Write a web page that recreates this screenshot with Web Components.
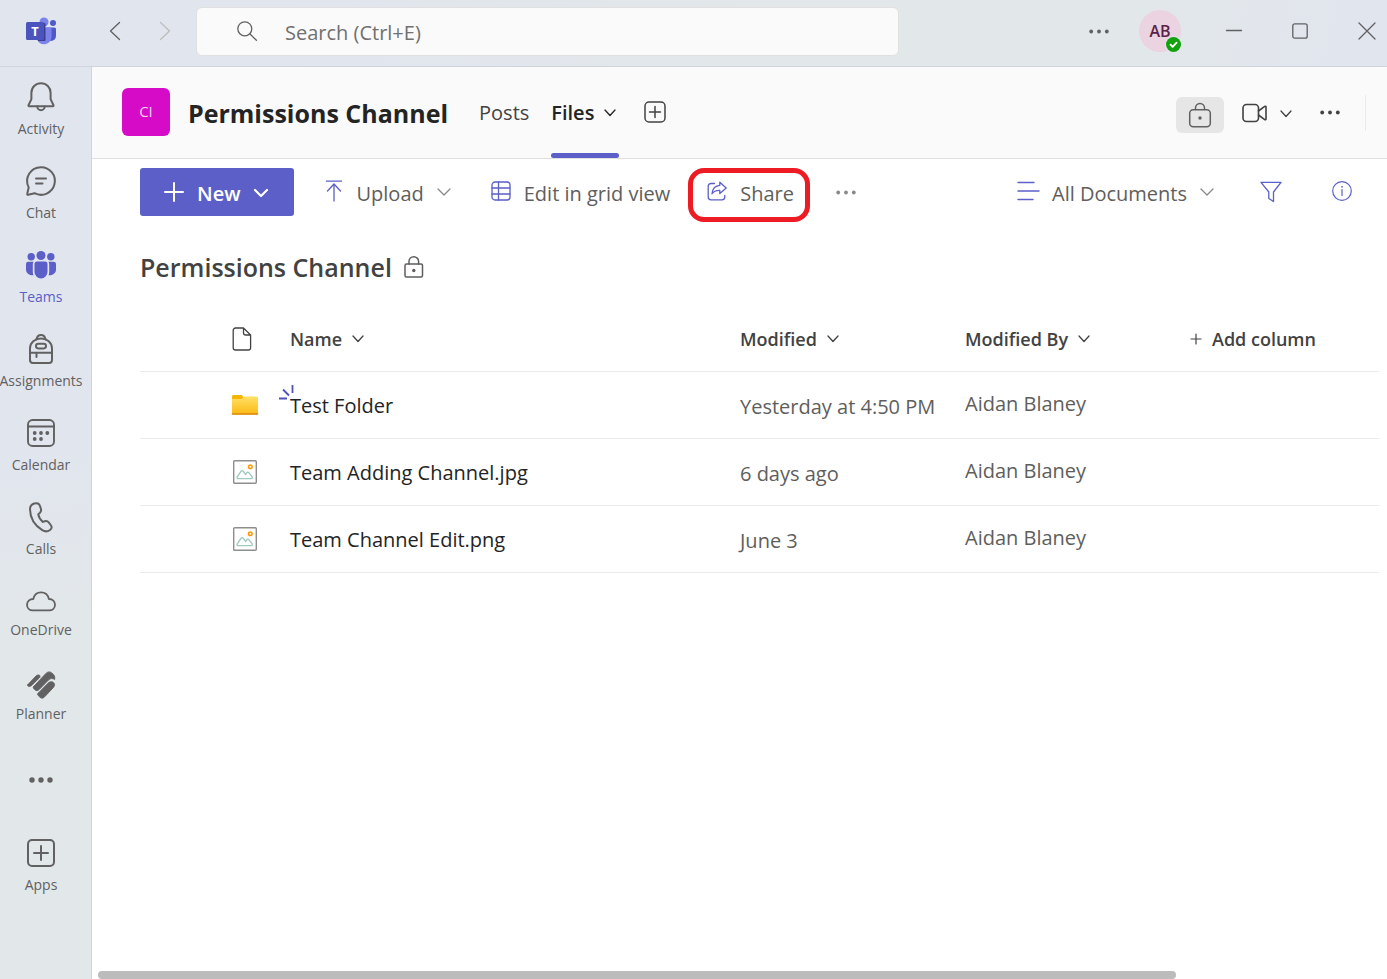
<!DOCTYPE html>
<html lang="en">
<head>
<meta charset="utf-8">
<meta name="viewport" content="width=device-width, initial-scale=1">
<title>Permissions Channel - Files</title>
<style>
  body { margin: 0; font-family: "Open Sans", "Noto Sans", sans-serif; color: #424242; }
</style>
</head>
<body>
<teams-app></teams-app>

<script>
const ICONS = {
  logo: [30, 28, `<g stroke="none"><circle cx="18" cy="5" r="4.500" fill="#7b83eb"/><circle cx="27" cy="6" r="3" fill="#5059c9"/>
    <path d="M20 10.500h8.500a1.500 1.500 0 0 1 1.500 1.500V19a5 5 0 0 1-10 0z" fill="#5059c9"/>
    <path d="M10 10.500h14a1.500 1.500 0 0 1 1.500 1.500V20a7.500 7.500 0 0 1-14.800 1.500z" fill="#7b83eb"/>
    <path d="M11 6h7.500a1 1 0 0 1 1 1v16a1 1 0 0 1-1 1H12z" fill="#3c3f91"/>
    <rect x="0" y="5" width="18" height="18" rx="1.600" fill="#4b53bc"/>
    <text x="9" y="18.500" text-anchor="middle" font-family="Open Sans, sans-serif" font-weight="700" font-size="13" fill="#fff">T</text></g>`],
  back: [12, 20, `<path d="M10.500 1.500 1.500 10l9 8.500"/>`],
  forward: [12, 20, `<path d="M1.500 1.500 10.500 10l-9 8.500"/>`],
  search: [20, 20, `<circle cx="7.800" cy="7.800" r="7"/><path d="m13 13 6.400 6.300"/>`],
  dots: [20, 5, `<g fill="currentColor" stroke="none"><circle cx="2.200" cy="2.500" r="1.900"/><circle cx="10" cy="2.500" r="1.900"/><circle cx="17.800" cy="2.500" r="1.900"/></g>`],
  railDots: [24, 6, `<g fill="currentColor" stroke="none"><circle cx="3" cy="3" r="2.700"/><circle cx="12" cy="3" r="2.700"/><circle cx="21" cy="3" r="2.700"/></g>`],
  minimize: [16, 16, `<path d="M.5 7.500h15"/>`],
  maximize: [16, 16, `<rect x=".8" y=".8" width="14.400" height="14.400" rx="2"/>`],
  close: [18, 18, `<path d="m1 1 16 16M17 1 1 17"/>`],
  check: [15, 15, `<circle cx="7.500" cy="7.500" r="7.500" fill="#13a10e" stroke="none"/><path d="m4.500 7.700 2.100 2.100L10.600 5.700" stroke="#fff" stroke-width="1.800"/>`],
  bell: [30, 30, `<path d="M15 1.200c-5.400 0-9.600 4.200-9.600 9.500v6.400l-2.900 6.100c-.2.500.1 1 .6 1h23.800c.5 0 .8-.5.6-1l-2.900-6.100v-6.400c0-5.300-4.200-9.500-9.600-9.500z"/><path d="M11.300 24.500a3.700 3.700 0 0 0 7.400 0"/>`, 2],
  chat: [30, 30, `<path d="M15 1.200A13.800 13.800 0 1 1 8.600 27.200L2.200 28.800c-.7.200-1.200-.4-1-1L2.700 21.400A13.800 13.800 0 0 1 15 1.200z"/><path d="M10 12.500h10M10 17.500h6.500"/>`, 2],
  teams: [30, 30, `<g fill="currentColor" stroke="none"><circle cx="15" cy="5.500" r="4.500"/><circle cx="5.200" cy="6.700" r="3.700"/><circle cx="24.800" cy="6.700" r="3.700"/>
    <path d="M11 11.500h8a2.500 2.500 0 0 1 2.500 2.500v8a6.500 6.500 0 0 1-13 0v-8a2.500 2.500 0 0 1 2.500-2.500z"/>
    <path d="M2.300 11.800h5.300c-.6.900-.8 1.700-.8 2.700v7.500c0 1.200.2 2.200.7 3.200C3.300 25.800 0 23 0 19.500v-5.400a2.300 2.300 0 0 1 2.300-2.300zM27.700 11.800h-5.300c.6.900.8 1.700.8 2.700v7.500c0 1.200-.2 2.200-.7 3.200 4.200.6 7.500-2.200 7.500-5.700v-5.400a2.300 2.300 0 0 0-2.300-2.300z"/></g>`],
  backpack: [30, 30, `<path d="M4 26V14.500C4 8.500 9 4.600 15 4.600s11 3.900 11 9.900V26a3 3 0 0 1-3 3H7a3 3 0 0 1-3-3z"/><path d="M10.500 5.500C11 2.500 12.700 1 15 1s4 1.500 4.500 4.500M4 18.700h22M10.500 19v4"/><rect x="10" y="9.800" width="10" height="4.600" rx="2.300"/>`, 2],
  calendar: [30, 30, `<rect x="2" y="2" width="26" height="26" rx="4.500"/><path d="M2 8.500h26"/><g fill="currentColor" stroke="none"><circle cx="8.700" cy="15" r="1.900"/><circle cx="15" cy="15" r="1.900"/><circle cx="21.300" cy="15" r="1.900"/><circle cx="8.700" cy="21" r="1.900"/><circle cx="15" cy="21" r="1.900"/></g>`, 1.900],
  phone: [30, 30, `<path d="M8.200 1.500c2.900-1 5 .1 5.900 2.800l.8 2.500c.5 1.800.1 3.200-1.300 4.400l-1.300 1.100c.4 2.600 2 5.200 4.600 7.600l1.900-.6c1.600-.5 3 0 4.100 1.400l1.800 2.300c1.500 2 1.200 3.600-.7 5-2.400 1.700-5 1.900-7.700.2C8.800 23.400 4.100 15.500 4 7.200 4 4.200 5.500 2.400 8.200 1.500z"/>`, 2],
  cloud: [30, 30, `<path d="M6.800 24.400C3.500 24.400 1 22 1 18.800s2.600-5.800 6.300-5.800c.9-4.100 3.900-6.700 7.700-6.700 3.900 0 7 2.500 7.900 6.700 3.600-.1 6.100 2.400 6.100 5.700 0 3.300-2.500 5.700-5.800 5.700z"/>`, 1.800],
  planner: [30, 30, `<g fill="currentColor" stroke-width=".9"><path d="M1.900 14.600 10 6c1.300-1.300 3.300-1.300 3.900-.3.400.7.100 1.500-.7 2.300l-7.300 7.200c-1.700 1.600-3.500 1.500-4.200.6-.3-.3-.2-.8.200-1.200z"/>
    <path d="M7.500 16.700 19.400 4c2-2.200 4-2.800 6.300-1.100 2.300 1.600 3.600 3.700 2.900 6.600-1.600-1.300-4.300-1.400-6.100.5l-9.400 9.600c-1.300 1.300-3 1.300-4 .3l-1.500-1.500c-.5-.5-.5-1.200-.1-1.700z"/>
    <path d="m12.200 23.200 9.800-10c2-1.900 4.700-1.800 5.900-.2 1.100 1.400.7 3.200-.7 4.700l-8.700 9.200c-1.600 1.600-3.200 1.600-4.700.2l-1.600-1.600c-.8-.8-.8-1.600 0-2.300z"/></g>`],
  apps: [30, 30, `<rect x="2" y="2" width="26" height="26" rx="4"/><path d="M15 8v14M8 15h14"/>`, 2],
  addTab: [22, 22, `<rect x="1" y="1" width="20" height="20" rx="4"/><path d="M11 5.500v11M5.500 11h11"/>`, 1.500],
  chevron: [14, 8, `<path d="m1 1 6 6 6-6"/>`],
  chevronBold: [14, 8, `<path d="m1 1 6 6 6-6"/>`, 2.200],
  chevronSmall: [12, 8, `<path d="m1 1 5 5.500L11 1"/>`],
  plusSmall: [12, 12, `<path d="M6 1v10M1 6h10"/>`, 1.200],
  lock: [24, 26, `<rect x="1.700" y="7.700" width="20.600" height="17" rx="3.500"/><path d="M7.500 7.500V6a4.500 4.500 0 0 1 9 0v1.500"/><circle cx="12" cy="16" r="1.700" fill="currentColor" stroke="none"/>`, 1.500],
  siteLock: [20, 22, `<rect x="1" y="8" width="17.500" height="13" rx="1.500"/><path d="M5 8V5.500a4.800 4.800 0 0 1 9.600 0V8"/><circle cx="9.800" cy="14.500" r="1.700" fill="currentColor" stroke="none"/>`, 1.500],
  camera: [26, 20, `<rect x="1" y="1.500" width="15.500" height="17" rx="3.500"/><path d="m16.500 8 6.200-4.600c.6-.4 1.300 0 1.300.6v12c0 .7-.8 1-1.300.6L16.500 12"/>`, 1.600],
  plus: [20, 20, `<path d="M10 1v18M1 10h18"/>`, 2],
  upload: [20, 22, `<path d="M2.500 1.200h15M10 21V4M3.500 11 10 4l6.500 7"/>`],
  grid: [20, 20, `<rect x="1" y="1" width="18" height="18" rx="3"/><path d="M1 7h18M1 13h18M7.500 1v18"/>`, 1.300],
  share: [20, 20, `<path d="M7.500 2.500H4A2.800 2.800 0 0 0 1.200 5.300V16A2.800 2.800 0 0 0 4 18.800h11a2.800 2.800 0 0 0 2.800-2.800v-1.500"/><path d="M12.800 1.200 19.200 7l-6.400 5.600V9.400C9 9.200 6.800 10.300 5 12.700c.4-4.500 3-8 7.800-8.400z"/>`, 1.300],
  view: [22, 20, `<path d="M1 1.500h16M1 10h21M1 18.500h15"/>`, 1.400],
  filter: [22, 22, `<path d="M1 1.300h20L13.500 11v9.500l-4.700-3V11z"/>`],
  info: [20, 20, `<circle cx="10" cy="10" r="9.300"/><path d="M10 8.500v6"/><circle cx="10" cy="5.800" r=".9" fill="currentColor" stroke="none"/>`, 1.200],
  file: [22, 24, `<path d="M12.500 1H4.500A2.300 2.300 0 0 0 2.200 3.300v17.400A2.300 2.300 0 0 0 4.500 23h12.800a2.300 2.300 0 0 0 2.300-2.300V8zM12.500 1v4.700A2.300 2.300 0 0 0 14.800 8h4.800"/>`, 1.300],
  folder: [28, 22, `<defs><linearGradient id="f" x2="0" y2="1"><stop stop-color="#ffe066"/><stop offset="1" stop-color="#fdb913"/></linearGradient></defs>
    <path d="M1 5V2.500C1 1.700 1.700 1 2.500 1h8.300l2 2.500L10 6z" fill="#f5b400" stroke="none"/><path d="M1 5h9.500L13 2.500h12.500a1.500 1.500 0 0 1 1.500 1.500v15a1.500 1.500 0 0 1-1.500 1.500h-23A1.500 1.500 0 0 1 1 19z" fill="url(#f)" stroke="none"/><path d="M1.300 20h25.400" stroke="#d78a10"/>`],
  image: [28, 24, `<rect x="2.700" y=".7" width="22.600" height="22.600" rx="1" fill="#fff" stroke="#8e8e8e" stroke-width="1.400"/><circle cx="19.300" cy="6.800" r="1.800" stroke="#ff9800" stroke-width="1.500"/>
    <path d="M6.500 18.600c-.7-.3-.6-1.200-.2-1.800l3.600-5.400c.7-1 1.700-1 2.400 0l2.200 3 1.200-1.500c.7-.8 1.600-.8 2.300 0l3 3.700c.6.800.3 2-.8 2z" stroke="#9fcabf" stroke-width="1.400"/>`],
  glint: [16, 16, `<path d="M1 14.500h8M5 5.500l6 6M14.500 1v8" stroke="#4f52b8" stroke-width="1.800" stroke-linecap="butt"/>`]
};

function define(name, html) {
  const template = document.createElement("template");
  template.innerHTML = html;
  customElements.define(name, class extends HTMLElement {
    constructor() {
      super();
      this.attachShadow({ mode: "open" }).append(template.content.cloneNode(true));
    }
  });
}

/* <ui-icon name="…"> draws one glyph from the icon set at its natural size. */
customElements.define("ui-icon", class extends HTMLElement {
  connectedCallback() {
    if (this.shadowRoot) return;
    const [w, h, art, stroke = 1.3] = ICONS[this.getAttribute("name")];
    this.attachShadow({ mode: "open" }).innerHTML = `
      <style>:host { display: inline-flex; flex: none; } svg { display: block; overflow: visible; }</style>
      <svg width="${w}" height="${h}" viewBox="0 0 ${w} ${h}" fill="none" stroke="currentColor"
        stroke-width="${stroke}" stroke-linecap="round" stroke-linejoin="round" aria-hidden="true">${art}</svg>`;
  }
});

/* Icon-only button. */
customElements.define("icon-button", class extends HTMLElement {
  connectedCallback() {
    if (this.shadowRoot) return;
    this.attachShadow({ mode: "open" }).innerHTML = `
      <style>
        :host { display: inline-flex; flex: none; }
        button { display: flex; align-items: center; justify-content: center; border: 0; padding: 0; background: none; color: inherit; font: inherit; }
      </style>
      <button type="button" aria-label="${this.getAttribute("label")}"><ui-icon name="${this.getAttribute("icon")}"></ui-icon></button>`;
  }
});

/* Labelled toolbar button, with an optional drop-down chevron. */
customElements.define("command-button", class extends HTMLElement {
  connectedCallback() {
    if (this.shadowRoot) return;
    const chevron = this.hasAttribute("primary") ? "chevronBold" : "chevron";
    this.attachShadow({ mode: "open" }).innerHTML = `
      <style>
        :host { display: inline-flex; flex: none; position: relative; color: #605e5c; --icon: #5b5fc7; --chevron: #8a8886; }
        button { display: flex; align-items: center; gap: 13px; height: 48px; border: 0; padding: 0; background: none;
          color: inherit; font: inherit; font-size: 20px; line-height: 28px; white-space: nowrap; }
        span { padding-top: 4px; }
        .icon { color: var(--icon); margin-bottom: 2px; }
        .chevron { color: var(--chevron); }
        :host([primary]) { color: #fff; --icon: #fff; --chevron: #fff; }
        :host([primary]) button { background: #5b5fc7; border-radius: 3px; padding: 0 26px 0 24px; font-weight: 600; }
        :host([primary]) .icon { margin-bottom: 0; }
        :host([primary]) .chevron { margin-top: 2px; }
        :host([marked])::after { content: ""; position: absolute; inset: 0 -16px -6px -19px; border: 5px solid #ed1c24; border-radius: 16px; pointer-events: none; }
      </style>
      <button type="button"><ui-icon class="icon" name="${this.getAttribute("icon")}"></ui-icon><span><slot></slot></span>
      ${this.hasAttribute("menu") ? `<ui-icon class="chevron" name="${chevron}"></ui-icon>` : ""}</button>`;
  }
});

/* Entry of the left app rail. */
customElements.define("rail-item", class extends HTMLElement {
  connectedCallback() {
    if (this.shadowRoot) return;
    this.attachShadow({ mode: "open" }).innerHTML = `
      <style>
        :host { display: block; color: #616161; }
        :host([selected]) { color: #5b5fc7; }
        button { display: flex; flex-direction: column; align-items: center; gap: 7px; width: 100%; height: 84px;
          border: 0; padding: 11px 0 0; background: none; color: inherit; font: inherit; font-size: 14px; line-height: 20px; }
        :host([compact]) button { gap: 4px; }
        :host([more]) button { padding-top: 34px; }
      </style>
      <button type="button" ${this.hasAttribute("more") ? 'aria-label="More apps"' : ""}><ui-icon name="${this.getAttribute("icon")}"></ui-icon><span><slot></slot></span></button>`;
  }
});

define("title-bar", `
  <style>
    :host { display: flex; align-items: center; height: 62px; padding: 0 11px 4px 26px; border-bottom: 1px solid #d1d5db; color: #616161; }
    .back { margin-left: 53px; }
    .forward { margin-left: 38px; color: #bdbdbd; }
    .search { box-sizing: border-box; display: flex; align-items: center; gap: 28px; flex: 1; max-width: 703px; height: 49px; margin-left: 25px; padding: 0 40px;
      border: 1px solid #e0e0e0; border-radius: 6px; background: #fafafa; }
    .search ui-icon { margin-bottom: 1px; }
    input { flex: 1; min-width: 0; border: 0; padding: 3px 0 0; outline: 0; background: none; font: inherit; font-size: 20px; line-height: 28px; color: #424242; }
    input::placeholder { color: #707070; opacity: 1; }
    .right { display: flex; align-items: center; margin-left: auto; gap: 50px; }
    .me { display: flex; align-items: center; gap: 30px; margin-right: -5px; }
    .avatar { position: relative; display: grid; place-items: center; width: 42px; height: 42px; border: 0; padding: 0; border-radius: 50%;
      background: #ebd3e1; color: #5c2247; font: inherit; font-weight: 600; font-size: 16px; line-height: 20px; }
    .avatar ui-icon { position: absolute; right: 0; bottom: 0; border-radius: 50%; box-shadow: 0 0 0 1px #e2e7ea; }
  </style>
  <ui-icon name="logo"></ui-icon>
  <icon-button class="back" icon="back" label="Back"></icon-button>
  <icon-button class="forward" icon="forward" label="Forward"></icon-button>
  <label class="search"><ui-icon name="search"></ui-icon><input type="text" placeholder="Search (Ctrl+E)" aria-label="Search"></label>
  <div class="right">
    <div class="me">
      <icon-button icon="dots" label="Settings and more"></icon-button>
      <button type="button" class="avatar">AB<ui-icon name="check"></ui-icon></button>
    </div>
    <icon-button icon="minimize" label="Minimize"></icon-button>
    <icon-button icon="maximize" label="Maximize"></icon-button>
    <icon-button icon="close" label="Close"></icon-button>
  </div>`);

define("app-rail", `
  <style>:host { display: block; padding: 4px 9px 0 0; border-right: 1px solid #d1d5db; } nav { display: block; }</style>
  <nav aria-label="Apps">
    <rail-item icon="bell">Activity</rail-item>
    <rail-item icon="chat">Chat</rail-item>
    <rail-item icon="teams" selected>Teams</rail-item>
    <rail-item icon="backpack">Assignments</rail-item>
    <rail-item icon="calendar">Calendar</rail-item>
    <rail-item icon="phone">Calls</rail-item>
    <rail-item icon="cloud" compact>OneDrive</rail-item>
    <rail-item icon="planner" compact>Planner</rail-item>
    <rail-item icon="railDots" more></rail-item>
    <rail-item icon="apps">Apps</rail-item>
  </nav>`);

define("channel-header", `
  <style>
    :host { display: flex; align-items: center; height: 91px; padding: 0 21px 0 30px; background: #fafafa; border-bottom: 1px solid #e0e0e0; color: #424242; }
    .badge { display: grid; place-items: center; flex: none; box-sizing: border-box; width: 48px; height: 48px; margin-bottom: 2px; padding-bottom: 2px; border-radius: 6px; background: #d60bc8; color: #fbd0f6; font-size: 15px; line-height: 20px; }
    h1 { margin: 0 0 0 18px; font-size: 25px; line-height: 32px; font-weight: 700; color: #242424; white-space: nowrap; }
    nav { display: flex; align-self: stretch; gap: 22px; margin: 0 28px 0 31px; font-size: 20px; line-height: 28px; }
    a { display: flex; align-items: center; gap: 10px; color: inherit; text-decoration: none; border: solid transparent; border-width: 6px 0 5px; position: relative; }
    a[aria-current] { font-weight: 600; color: #242424; }
    a[aria-current]::after { content: ""; position: absolute; left: 0; right: -3px; bottom: -5px; height: 5px; border-radius: 3px; background: #5b5fc7; }
    .add { margin-bottom: 2px; }
    .tools { display: flex; align-items: center; margin-left: auto; }
    .lock { display: grid; place-items: center; width: 48px; height: 36px; border: 0; padding: 0; margin: 4px 18px 0 0; border-radius: 6px; background: #e6e6e6; color: #616161; }
    .menu { margin: 2px 28px 0 12px; }
    .rule { width: 1px; height: 36px; margin-left: 25px; background: #ebebeb; }
  </style>
  <span class="badge">CI</span>
  <h1>Permissions Channel</h1>
  <nav aria-label="Channel tabs">
    <a href="#posts">Posts</a>
    <a href="#files" aria-current="page">Files <ui-icon name="chevronSmall"></ui-icon></a>
  </nav>
  <icon-button class="add" icon="addTab" label="Add a tab"></icon-button>
  <div class="tools">
    <button type="button" class="lock" aria-label="Private channel"><ui-icon name="lock"></ui-icon></button>
    <icon-button icon="camera" label="Meet now"></icon-button>
    <icon-button class="menu" icon="chevronSmall" label="Meeting options"></icon-button>
    <icon-button icon="dots" label="More options"></icon-button>
    <span class="rule"></span>
  </div>`);

define("command-bar", `
  <style>
    :host { display: flex; align-items: center; padding: 9px 35px 0 48px; color: #605e5c; }
    .upload { margin-left: 30px; }
    .grid { margin-left: 40px; }
    .share { margin-left: 37px; }
    .more { margin: 0 auto 0 42px; color: #8a8886; }
    .filter { margin: 0 50px 0 46px; color: #5b5fc7; }
    .info { margin-bottom: 2px; color: #5b5fc7; }
  </style>
  <command-button primary menu icon="plus">New</command-button>
  <command-button class="upload" menu icon="upload">Upload</command-button>
  <command-button class="grid" icon="grid">Edit in grid view</command-button>
  <command-button class="share" marked icon="share">Share</command-button>
  <icon-button class="more" icon="dots" label="More commands"></icon-button>
  <command-button menu icon="view">All Documents</command-button>
  <icon-button class="filter" icon="filter" label="Filters"></icon-button>
  <icon-button class="info" icon="info" label="Details"></icon-button>`);

/* Document library: heading and the table of files. */
customElements.define("file-library", class extends HTMLElement {
  connectedCallback() {
    if (this.shadowRoot) return;
    const files = [
      ["folder", "Test Folder", "Yesterday at 4:50 PM", "Aidan Blaney", true],
      ["image", "Team Adding Channel.jpg", "6 days ago", "Aidan Blaney"],
      ["image", "Team Channel Edit.png", "June 3", "Aidan Blaney"]
    ];
    const sortable = (label) => `<th scope="col"><button type="button">${label} <ui-icon name="chevronSmall"></ui-icon></button></th>`;
    this.attachShadow({ mode: "open" }).innerHTML = `
      <style>
        :host { display: block; padding: 35px 8px 0 48px; }
        h2 { display: flex; align-items: center; gap: 12px; margin: 0; font-size: 25px; line-height: 32px; font-weight: 600; color: #424242; }
        h2 ui-icon { color: #605e5c; }
        table { width: 100%; margin-top: 24px; border-collapse: collapse; table-layout: fixed; font-size: 20px; line-height: 28px; }
        col.type { width: 150px; } col.name { width: 450px; } col.meta { width: 225px; }
        th, td { box-sizing: border-box; height: 67px; padding: 0; border-bottom: 1px solid #ebebeb; text-align: left; vertical-align: middle; white-space: nowrap; color: #605e5c; }
        th { height: 64px; color: #424242; }
        td { padding-top: 2px; }
        .type { padding: 0 0 2px 91px; }
        .type ui-icon { vertical-align: middle; }
        th button { display: flex; align-items: center; gap: 10px; border: 0; padding: 0; background: none; color: inherit; font: inherit; font-weight: 600; font-size: 18px; line-height: 24px; }
        .date { padding-top: 4px; }
        .by { padding: 0 0 2px; }
        a { color: #242424; text-decoration: none; position: relative; }
        a ui-icon { position: absolute; left: -12px; top: -8px; }
      </style>
      <h2>Permissions Channel <ui-icon name="siteLock"></ui-icon></h2>
      <table>
        <colgroup><col class="type"><col class="name"><col class="meta"><col class="meta"><col></colgroup>
        <thead><tr>
          <th class="type" scope="col" aria-label="File type"><ui-icon name="file"></ui-icon></th>
          ${["Name", "Modified", "Modified By"].map(sortable).join("")}
          <th scope="col"><button type="button"><ui-icon name="plusSmall"></ui-icon> Add column</button></th>
        </tr></thead>
        <tbody>${files.map(([type, name, date, by, fresh]) => `<tr>
          <td class="type"><ui-icon name="${type}"></ui-icon></td>
          <td><a href="#file">${fresh ? '<ui-icon name="glint"></ui-icon>' : ""}${name}</a></td>
          <td class="date">${date}</td><td class="by">${by}</td><td></td></tr>`).join("")}</tbody>
      </table>`;
  }
});

define("scroll-track", `
  <style>
    :host { display: block; margin-top: auto; padding: 0 6px; }
    div { width: 84%; height: 8px; border-radius: 4px; background: #bcbcbc; }
  </style>
  <div></div>`);

define("teams-app", `
  <style>
    :host { display: grid; grid-template: auto 1fr / 92px 1fr; min-height: 100vh;
      background: linear-gradient(105deg, #e1e5ee 0%, #e1e5ee 18%, #e2e7ea 45%, #e2e7ea 70%, #e1e5ee 85%); }
    title-bar { grid-column: 1 / -1; }
    app-rail { background: linear-gradient(170deg, #e1e5ee 0%, #e1e5ee 40%, #e2e7ea 60%); }
    main { display: flex; flex-direction: column; min-width: 0; background: #fff; }
  </style>
  <title-bar></title-bar>
  <app-rail></app-rail>
  <main>
    <channel-header></channel-header>
    <command-bar></command-bar>
    <file-library></file-library>
    <scroll-track></scroll-track>
  </main>`);
</script>
</body>
</html>
